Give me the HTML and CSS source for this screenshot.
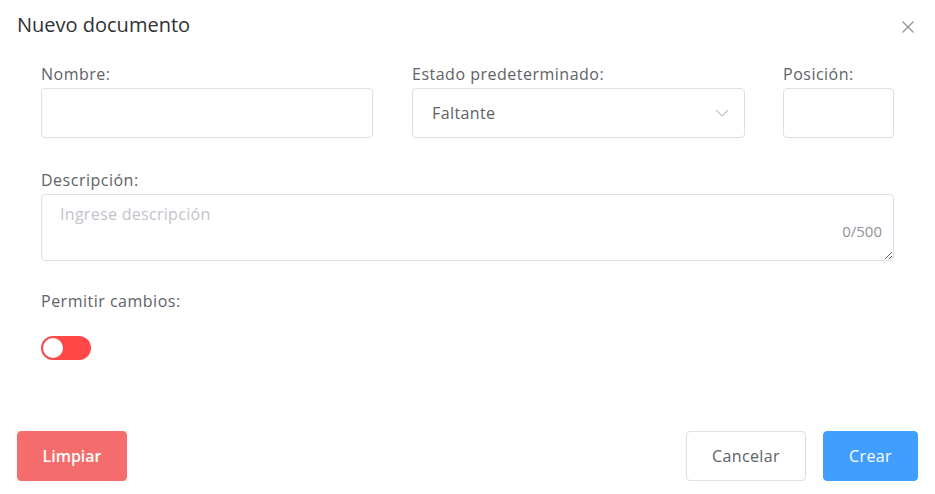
FILE: index.html
```html
<!DOCTYPE html>
<html lang="es">
<head>
<meta charset="utf-8">
<title>Nuevo documento</title>
<link rel="stylesheet" href="styles.css">
</head>
<body>
<div class="dialog">
  <div class="dialog-header">
    <span class="dialog-title">Nuevo documento</span>
    <button class="close-btn" aria-label="Cerrar">
      <svg width="14" height="14" viewBox="0 0 14 14"><path d="M1.5 1.5 L12.5 12.5 M12.5 1.5 L1.5 12.5" stroke="#909399" stroke-width="1.3" fill="none"/></svg>
    </button>
  </div>
  <div class="dialog-body">
    <div class="row-top">
      <div class="field">
        <label class="label">Nombre:</label>
        <input class="input" type="text">
      </div>
      <div class="field">
        <label class="label">Estado predeterminado:</label>
        <div class="select">
          <span class="select-value">Faltante</span>
          <svg class="select-arrow" width="14" height="8" viewBox="0 0 14 8"><path d="M1 1 L7 7 L13 1" stroke="#c0c4cc" stroke-width="1.2" fill="none"/></svg>
        </div>
      </div>
      <div class="field">
        <label class="label">Posición:</label>
        <input class="input" type="text">
      </div>
    </div>
    <div class="field field-desc">
      <label class="label">Descripción:</label>
      <div class="textarea-wrap">
        <textarea class="textarea" placeholder="Ingrese descripción"></textarea>
        <span class="counter">0/500</span>
      </div>
    </div>
    <div class="field field-switch">
      <label class="label">Permitir cambios:</label>
      <span class="switch"><span class="switch-knob"></span></span>
    </div>
  </div>
  <div class="dialog-footer">
    <button class="btn btn-danger">Limpiar</button>
    <div class="footer-right">
      <button class="btn btn-default">Cancelar</button>
      <button class="btn btn-primary">Crear</button>
    </div>
  </div>
</div>
</body>
</html>
```

FILE: styles.css
```css
* { box-sizing: border-box; }
html, body { margin: 0; padding: 0; background: #fff; }
body {
  font-family: "Open Sans", "Noto Sans", "DejaVu Sans", sans-serif;
  color: #606266;
}
.dialog { width: 935px; height: 494px; background: #fff; }
.dialog-header {
  display: flex;
  justify-content: space-between;
  align-items: flex-start;
  padding: 12px 20px 0 17px;
  height: 51px;
}
.dialog-title {
  font-size: 20px;
  line-height: 26px;
  color: #303133;
}
.close-btn {
  border: 0;
  background: transparent;
  padding: 0;
  margin-top: 8px;
  width: 14px;
  height: 14px;
  cursor: pointer;
}
.close-btn svg { display: block; }
.dialog-body { padding: 12px 41px 0 41px; }
.row-top {
  display: grid;
  grid-template-columns: 332px 333px 110px;
  column-gap: 39px;
}
.row-top .field:nth-child(3) { margin-left: -1px; }
.field { display: flex; flex-direction: column; }
.label {
  font-size: 16px;
  line-height: 22px;
  letter-spacing: 0.5px;
  color: #606266;
  margin-bottom: 3px;
}
.input {
  height: 50px;
  border: 1px solid #dcdfe6;
  border-radius: 4px;
  font: inherit;
  padding: 0 15px;
  outline: none;
}
.select {
  height: 50px;
  border: 1px solid #dcdfe6;
  border-radius: 4px;
  display: flex;
  align-items: center;
  justify-content: space-between;
  padding: 0 15px 0 19px;
}
.select-value { font-size: 16px; letter-spacing: 0.4px; color: #606266; }
.select-arrow { display: block; }
.field-desc { margin-top: 31px; }
.textarea-wrap { position: relative; }
.textarea {
  display: block;
  width: 100%;
  height: 67px;
  border: 1px solid #dcdfe6;
  border-radius: 4px;
  padding: 8px 18px;
  font: inherit;
  font-size: 16px;
  line-height: 22px;
  letter-spacing: 0.3px;
  color: #606266;
  resize: vertical;
  outline: none;
}
.textarea::placeholder { color: #c0c4cc; }
.counter {
  position: absolute;
  right: 12px;
  bottom: 21px;
  font-size: 15px;
  line-height: 18px;
  color: #909399;
}
.field-switch { margin-top: 29px; align-items: flex-start; }
.field-switch .label { margin-bottom: 24px; }
.switch {
  display: block;
  position: relative;
  width: 50px;
  height: 24px;
  border-radius: 12px;
  background: #ff4949;
}
.switch-knob {
  position: absolute;
  left: 2px;
  top: 2px;
  width: 20px;
  height: 20px;
  border-radius: 50%;
  background: #fff;
}
.dialog-footer {
  display: flex;
  justify-content: space-between;
  padding: 71px 17px 0 17px;
}
.footer-right { display: flex; gap: 17px; }
.btn {
  height: 50px;
  border-radius: 4px;
  font-family: inherit;
  font-size: 16px;
  letter-spacing: 0.4px;
  border: 1px solid transparent;
  cursor: pointer;
}
.btn-danger { width: 110px; background: #f56c6c; border-color: #f56c6c; color: #fff; font-weight: 600; letter-spacing: 0; }
.btn-default { width: 120px; background: #fff; border-color: #dcdfe6; color: #606266; }
.btn-primary { width: 95px; background: #409eff; border-color: #409eff; color: #fff; }
```
